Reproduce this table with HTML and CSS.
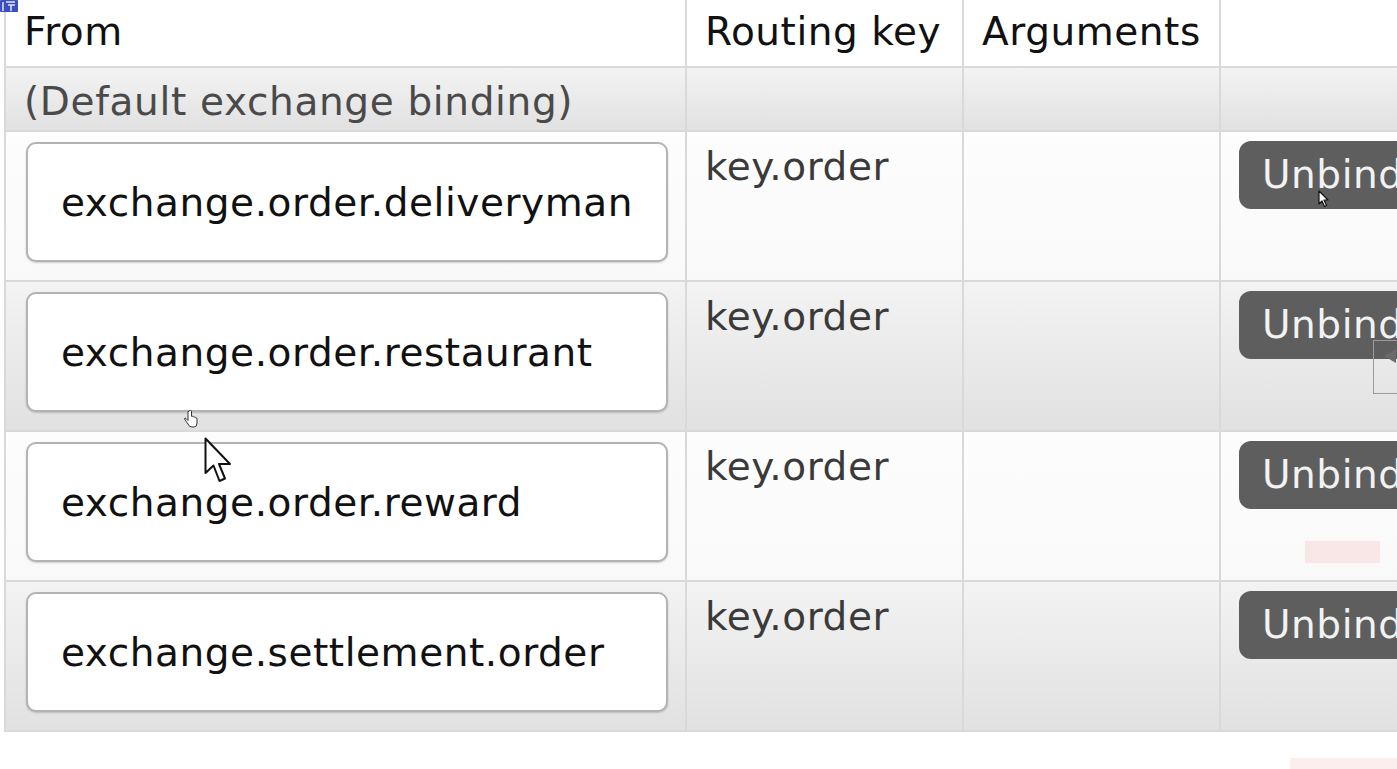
FILE: index.html
```html
<!DOCTYPE html>
<html lang="en">
<head>
<meta charset="utf-8">
<title>Bindings</title>
<link rel="stylesheet" href="styles.css">
</head>
<body>
<div class="page">
  <div class="bindings">
    <div class="cell head">From</div>
    <div class="cell head">Routing key</div>
    <div class="cell head">Arguments</div>
    <div class="cell head"></div>

    <div class="cell shade default-row">(Default exchange binding)</div>
    <div class="cell shade"></div>
    <div class="cell shade"></div>
    <div class="cell shade"></div>

    <div class="cell plain"><div class="exchange-box">exchange.order.deliveryman</div></div>
    <div class="cell plain key">key.order</div>
    <div class="cell plain"></div>
    <div class="cell plain"><span class="btn">Unbind</span></div>

    <div class="cell shade"><div class="exchange-box">exchange.order.restaurant</div></div>
    <div class="cell shade key">key.order</div>
    <div class="cell shade"></div>
    <div class="cell shade"><span class="btn">Unbind</span></div>

    <div class="cell plain"><div class="exchange-box">exchange.order.reward</div></div>
    <div class="cell plain key">key.order</div>
    <div class="cell plain"></div>
    <div class="cell plain"><span class="btn">Unbind</span></div>

    <div class="cell shade"><div class="exchange-box">exchange.settlement.order</div></div>
    <div class="cell shade key">key.order</div>
    <div class="cell shade"></div>
    <div class="cell shade"><span class="btn">Unbind</span></div>
  </div>

  <div class="side-widget"><span class="side-arrow"></span></div>
  <div class="smudge smudge-a"></div>
  <div class="smudge smudge-b"></div>

  <svg class="cursor cursor-arrow" width="30" height="48" viewBox="0 0 30 48">
    <path d="M1.5 1.5 L1.5 36 L9.5 28.5 L15.5 44 L21 41.5 L15 27 L26 27 Z" fill="#fff" stroke="#111" stroke-width="2" stroke-linejoin="round"/>
  </svg>
  <svg class="cursor cursor-hand" width="14" height="18" viewBox="0 0 14 18">
    <path d="M4 1.5 v9 l-2-2 q-1.5-1 -1.5 .5 l3.5 5 q1 3 4 3 h2 q3 0 3-4 v-4 q0-1.5-1.5-1.2 q-.5-1.3-2-.8 q-.5-1.2-2-.7 v-5 q0-1.3-1.3-1.3 q-1.2 0-1.2 1.3z" fill="#fff" stroke="#333" stroke-width="1"/>
  </svg>
  <svg class="cursor cursor-small" width="12" height="18" viewBox="0 0 12 18">
    <path d="M1 1 L1 14 L4 11 L6.5 16.5 L8.5 15.5 L6 10 L10 10 Z" fill="#fff" stroke="#111" stroke-width="1.2" stroke-linejoin="round"/>
  </svg>
  <svg class="corner-icon" width="18" height="12" viewBox="0 0 18 12">
    <rect x="0" y="0" width="18" height="12" fill="#3b4fb8" rx="1"/>
    <path d="M3 2 v9 M6 2 h9 M8 5 h7 M11 5 v6" stroke="#dfe4ff" stroke-width="1.5" fill="none"/>
  </svg>
</div>
</body>
</html>
```
FILE: styles.css
```css
html, body {
  margin: 0;
  padding: 0;
  background: #ffffff;
  overflow: hidden;
}

.page {
  position: relative;
  width: 1397px;
  height: 769px;
  overflow: hidden;
  font-family: "DejaVu Sans", Verdana, sans-serif;
}

.bindings {
  display: grid;
  grid-template-columns: 679px 275px 255px 300px;
  grid-template-rows: 66px 62px 148px 148px 148px 148px;
  gap: 2px;
  padding: 0 0 2px 2px;
  margin-left: 4px;
  width: max-content;
  background: #d9d9d9;
}

.cell {
  font-size: 39px;
  line-height: 45px;
  letter-spacing: 0.55px;
  color: #111;
  padding-left: 18px;
}

.head {
  background: #ffffff;
  padding-top: 9px;
}

.plain {
  background: linear-gradient(#fdfdfd, #f9f9f9);
}

.shade {
  background: linear-gradient(#f3f3f3, #e1e1e1);
}

.default-row {
  padding-top: 11px;
  letter-spacing: 0.65px;
  color: #4a4a4a;
}

.key {
  padding-top: 12px;
  color: #3a3a3a;
}

.exchange-box {
  box-sizing: border-box;
  margin: 10px 0 0 2px;
  width: 642px;
  height: 120px;
  border: 2px solid #b3b3b3;
  border-radius: 10px;
  background: #ffffff;
  box-shadow: 0 1px 2px rgba(0, 0, 0, 0.18);
  display: flex;
  align-items: center;
  padding-left: 33px;
  color: #111;
}

.btn {
  display: inline-block;
  margin-top: 9px;
  padding: 11px 40px 12px 23px;
  background: #5e5e5e;
  color: #f2f2f2;
  border-radius: 12px;
}

.side-widget {
  position: absolute;
  left: 1373px;
  top: 340px;
  width: 30px;
  height: 54px;
  border: 1px solid #9a9a9a;
  box-sizing: border-box;
}

.side-arrow {
  position: absolute;
  left: 10px;
  top: 8px;
  width: 0;
  height: 0;
  border-top: 7px solid transparent;
  border-bottom: 7px solid transparent;
  border-right: 12px solid #6a6a6a;
}

.smudge {
  position: absolute;
  background: #f9e6e6;
}

.smudge-a {
  left: 1305px;
  top: 541px;
  width: 75px;
  height: 22px;
}

.smudge-b {
  left: 1290px;
  top: 758px;
  width: 107px;
  height: 11px;
  background: #fbeeee;
}

.cursor {
  position: absolute;
}

.cursor-arrow {
  left: 204px;
  top: 437px;
}

.cursor-hand {
  left: 184px;
  top: 410px;
}

.cursor-small {
  left: 1318px;
  top: 190px;
}

.corner-icon {
  position: absolute;
  left: 0;
  top: 0;
}
```
